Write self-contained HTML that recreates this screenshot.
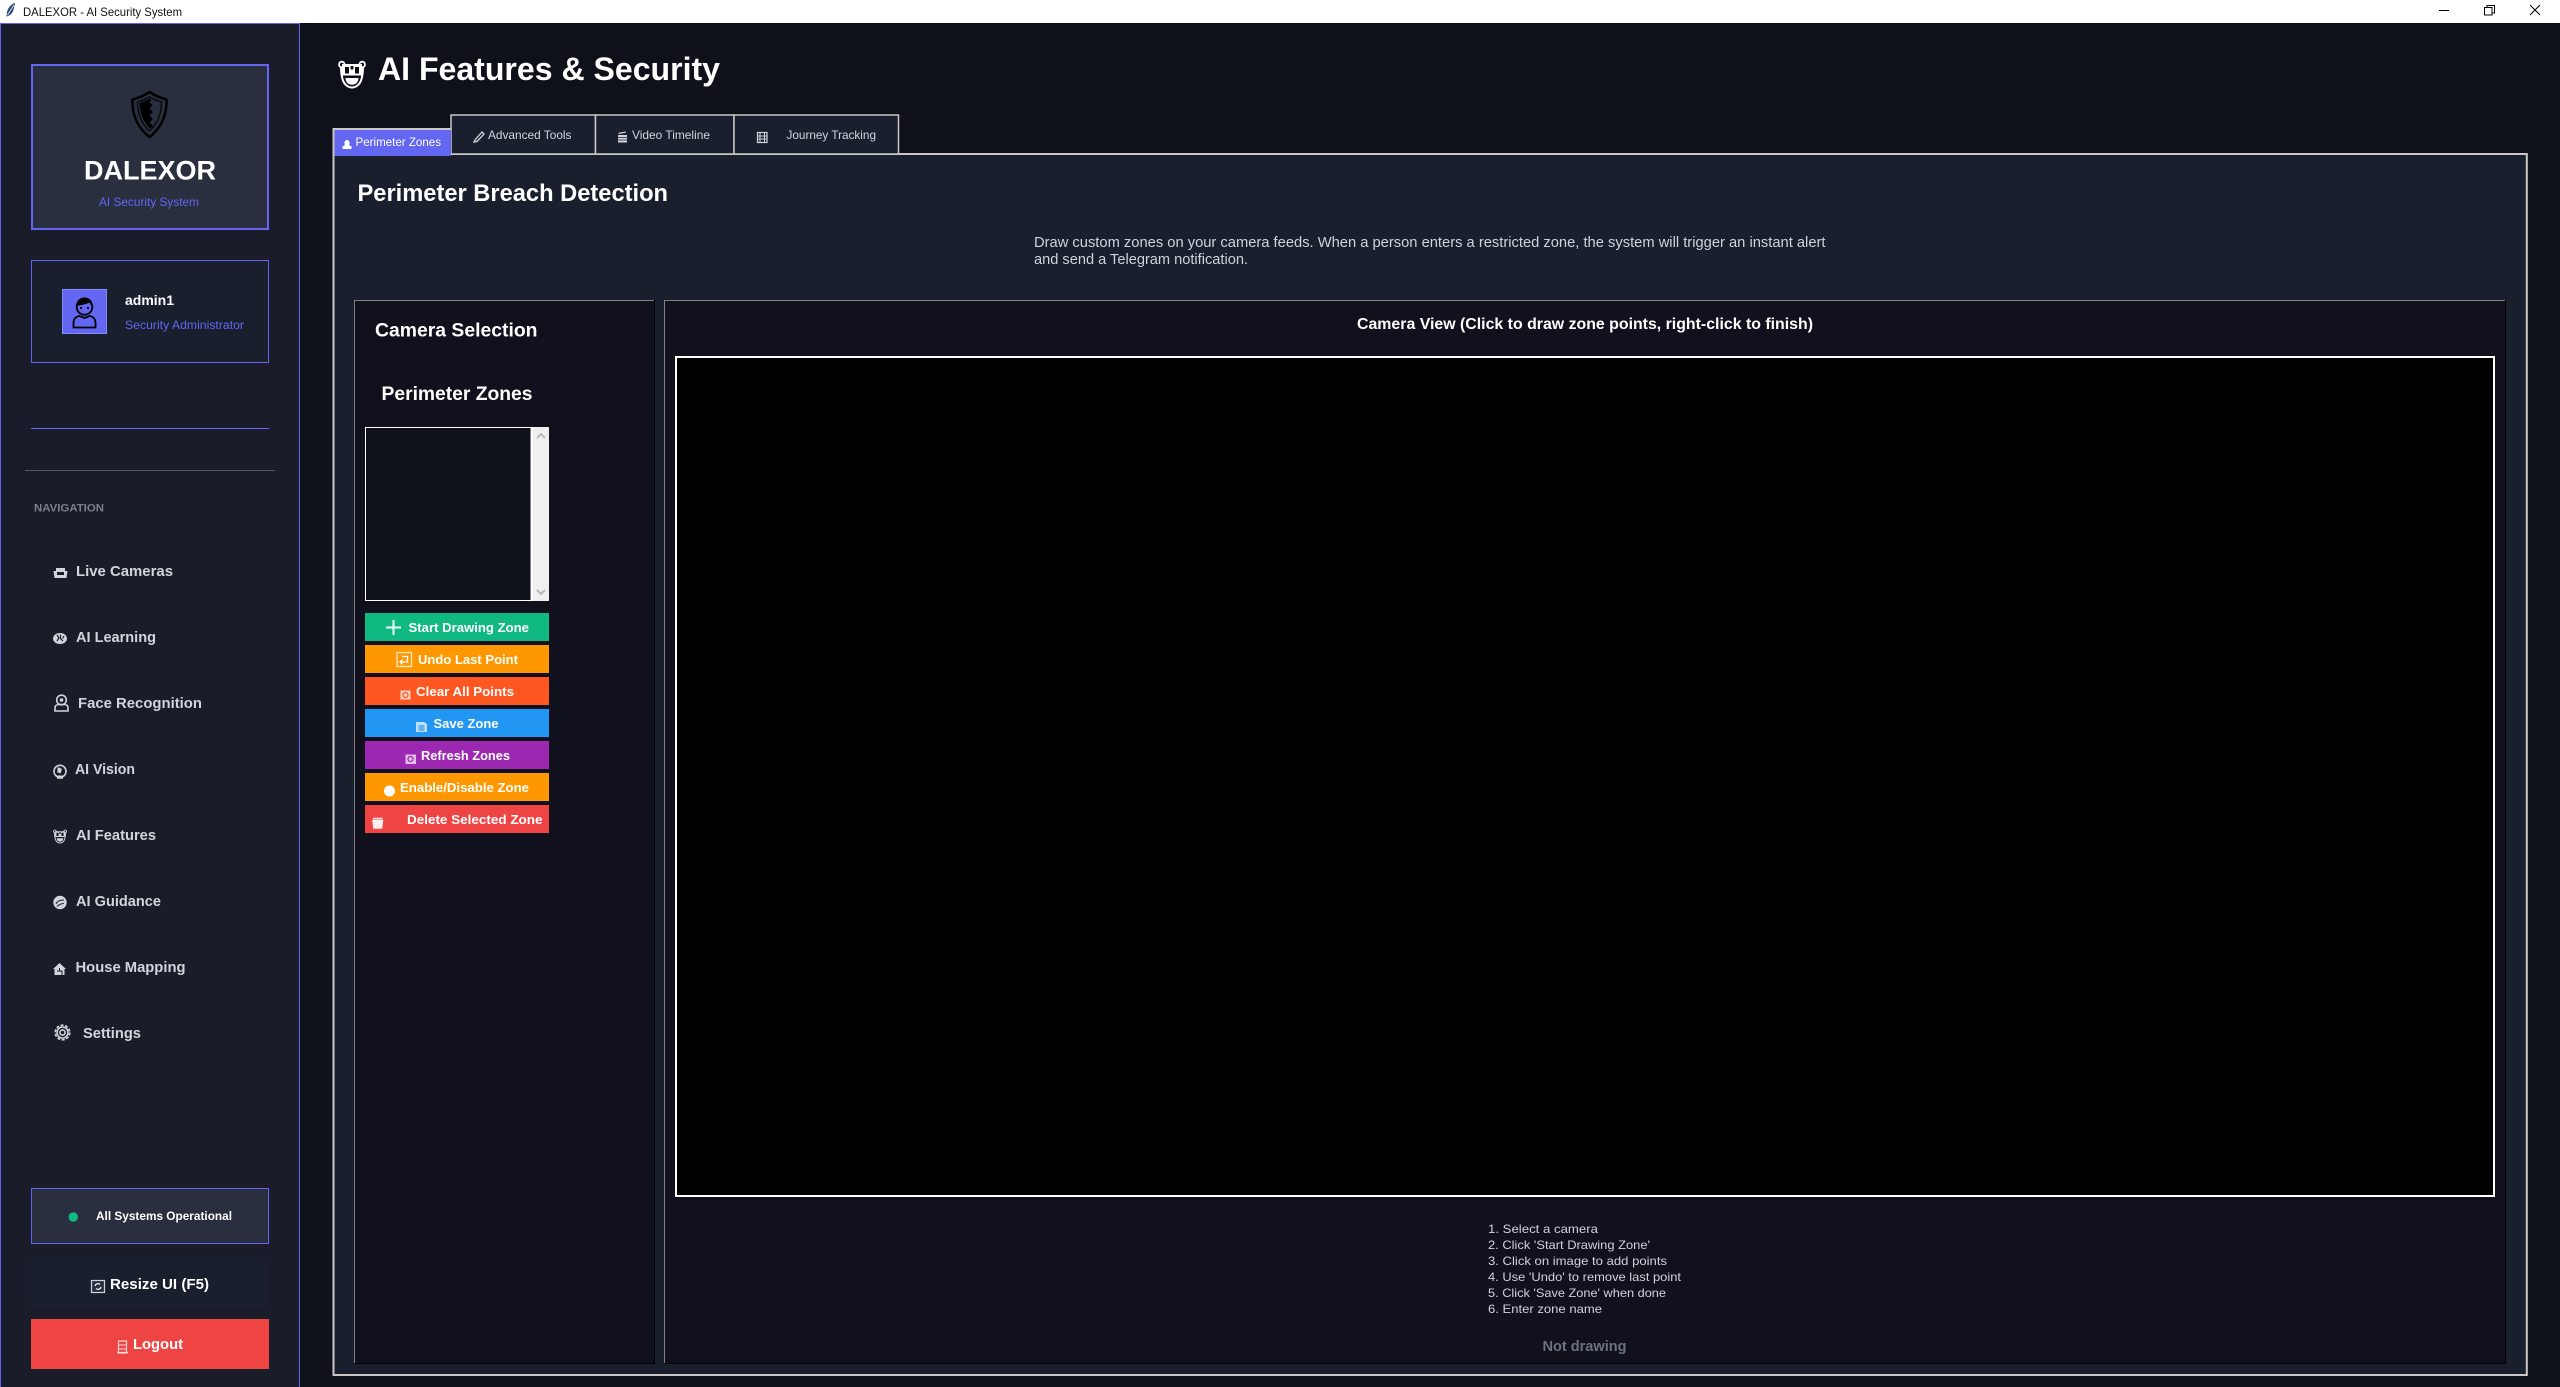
<!DOCTYPE html>
<html lang="en"><head><meta charset="utf-8"><title>DALEXOR - AI Security System</title>
<style>
html,body{margin:0;padding:0;background:#0f111a;width:2560px;height:1387px;overflow:hidden}
svg{display:block}
text{font-family:"Liberation Sans",Arial,sans-serif;fill:#fff}
.b{font-weight:700}
.nav{font-weight:700;font-size:15px;fill:#d1d5db}
.btn{font-weight:700;font-size:13px;fill:#fff}
.tab{font-size:12px;fill:#d1d5db}
.ins{font-size:12px;fill:#cfd3da}
.desc{font-size:15px;fill:#cfd3da}
.ic{fill:none;stroke:#d1d5db;stroke-width:1.6}
.icf{fill:#d1d5db}
</style></head><body>
<svg xmlns="http://www.w3.org/2000/svg" width="2560" height="1387" viewBox="0 0 2560 1387">
<defs>
<symbol id="beast" viewBox="0 0 28 28">
<circle cx="3.800" cy="4" r="2.800" fill="none" stroke="currentColor" stroke-width="1.800"/>
<circle cx="24.200" cy="4" r="2.800" fill="none" stroke="currentColor" stroke-width="1.800"/>
<path d="M3 6.500C3 12 3.500 16 5 20c1.500 4 5 7 9 7s7.500-3 9-7c1.500-4 2-8 2-13.500" fill="none" stroke="currentColor" stroke-width="2"/>
<path d="M4 3.500h20v11.500H4z" fill="currentColor"/>
<path d="M7 6.500h4v6.500H7zM12.600 5.500h2.800v3.500h-2.800zM17 6.500h4v6.500h-4z" fill="#0f111a"/>
<path d="M7.500 17.500h13c0 4-2.700 6.800-6.500 6.800s-6.500-2.800-6.500-6.800z" fill="currentColor"/>
</symbol>
</defs>

<!-- window -->
<rect width="2560" height="1387" fill="#0f111a"/>
<rect width="2560" height="23" fill="#fff"/>
<path d="M15 3c-4 1-7 5-8 9-.4 2-.4 3.500-.4 5l1-1c2.500-.5 4.500-2.500 5.500-5 .8-2.500 1.500-5.500 1.900-8z" fill="#2b4a78"/>
<path d="M14 5 7.500 15" stroke="#cfe0f5" stroke-width="1" fill="none"/>
<text x="23" y="16" font-size="12" style="fill:#111" textLength="159" lengthAdjust="spacingAndGlyphs">DALEXOR - AI Security System</text>
<rect x="2439" y="10" width="10" height="1" fill="#000"/>
<path d="M2484.500 7.500h7.500v7.500h-7.500zM2487 7.500V5.500h7.500v7.500H2492" fill="none" stroke="#000" stroke-width="1"/>
<path d="M2530 5l10 10M2540 5l-10 10" stroke="#000" stroke-width="1" fill="none"/>

<!-- sidebar -->
<rect x="0" y="23" width="300" height="1364" fill="#1a1d29"/>
<rect x="0" y="23" width="300" height="1" fill="#6366f1"/>
<rect x="0" y="23" width="1" height="1364" fill="#6366f1"/>
<rect x="299" y="23" width="1" height="1364" fill="#6366f1"/>

<!-- logo card -->
<rect x="32" y="65" width="236" height="164" fill="#2a2f3f" stroke="#6366f1" stroke-width="2"/>
<path d="M149.500 92C144 96 138 98 132.500 99.500 132 115 138 128 149.500 137 161 128 167 115 166.500 99.500 161 98 155 96 149.500 92z" fill="none" stroke="#000" stroke-width="2.400"/>
<path d="M149.500 97C145 99.500 141 101 137.500 102 137.500 114 142 124 149.500 131 157 124 161.500 114 161.500 102 158 101 154 99.500 149.500 97z" fill="none" stroke="#05060a" stroke-width="1.300"/>
<path d="M149.500 98.500C146 100.500 142.500 102 139.500 103 139.500 113 143.500 122 150 128.500L153 126 149.500 122.500 153 119 149.500 115.500 153 112 149.500 108.500 152.500 105 149.500 102 151.500 100z" fill="#000"/>
<text class="b" x="84" y="179.500" font-size="27" textLength="132" lengthAdjust="spacingAndGlyphs">DALEXOR</text>
<text x="99" y="206" font-size="12" style="fill:#6366f1" textLength="100" lengthAdjust="spacingAndGlyphs">AI Security System</text>

<!-- user card -->
<rect x="31.500" y="260.500" width="237" height="102" fill="#1a1f2e" stroke="#6366f1" stroke-width="1"/>
<rect x="62.500" y="289.500" width="44" height="44" fill="#6366f1" stroke="#818cf8" stroke-width="1"/>
<circle cx="84.500" cy="307" r="7.800" fill="none" stroke="#000" stroke-width="1.800"/>
<path d="M76.500 306c-.5-5.500 3.500-8.500 8-8.500s8.500 3 8 8.500c-1.500-.5-2.500-2-3-3.500-3 1.500-6.500 2.200-13 3.500z" fill="#000"/>
<rect x="80" y="307" width="2" height="2" fill="#111"/><rect x="87" y="307" width="2" height="2" fill="#111"/>
<path d="M73.500 327.500v-4.500c0-4 2.500-6.500 6-7l5 2 5-2c3.500.5 6 3 6 7v4.500z" fill="none" stroke="#000" stroke-width="1.800"/>
<text class="b" x="125" y="305" font-size="14" textLength="49" lengthAdjust="spacingAndGlyphs">admin1</text>
<text x="125" y="329" font-size="12" style="fill:#6366f1" textLength="119" lengthAdjust="spacingAndGlyphs">Security Administrator</text>

<rect x="31" y="428" width="238" height="1" fill="#6366f1"/>
<rect x="25" y="470" width="250" height="1" fill="#55585f"/>
<text class="b" x="34" y="511.500" font-size="11" style="fill:#7a808c" textLength="70" lengthAdjust="spacingAndGlyphs">NAVIGATION</text>

<!-- nav -->
<path d="M53.500 571h14l-1 7h-12z" class="icf"/><rect x="56" y="568" width="9" height="3.500" class="icf"/><path d="M57 572h7v3h-7z" fill="#1a1d29"/>
<text class="nav" x="76" y="576" textLength="97" lengthAdjust="spacingAndGlyphs">Live Cameras</text>

<ellipse cx="60" cy="638.500" rx="7" ry="5.500" class="icf"/><path d="M57 635l2 3-2 3M60.500 634.500v4l2.500 2.500M64 636l-1.500 2.500" stroke="#1a1d29" stroke-width="1.200" fill="none"/>
<text class="nav" x="76" y="642" textLength="80" lengthAdjust="spacingAndGlyphs">AI Learning</text>

<circle cx="61.500" cy="700" r="4.800" class="ic"/><circle cx="61.500" cy="700" r="1.800" class="icf"/><path d="M55 711v-3c0-2.500 2-3.500 4-3.500h5c2 0 4 1 4 3.500v3z" class="ic"/>
<text class="nav" x="78" y="708" textLength="124" lengthAdjust="spacingAndGlyphs">Face Recognition</text>

<path d="M57 776.500a6 6 0 1 1 6 0" class="ic"/><path d="M56.500 775.500l1 3h5l1-3M58 767.500l3.500 1.500-1 4-3-1z" class="icf" stroke="#d1d5db" stroke-width=".6"/>
<text class="nav" x="75" y="774" textLength="60" lengthAdjust="spacingAndGlyphs">AI Vision</text>

<use href="#beast" x="53" y="829.500" width="14" height="14" style="color:#d1d5db"/>
<text class="nav" x="76" y="840" textLength="80" lengthAdjust="spacingAndGlyphs">AI Features</text>

<circle cx="60" cy="902.500" r="6.700" class="icf"/><path d="M56 904c1-3 4-4 8-4M57 906.500c2-2 4-3 7-3" stroke="#1a1d29" stroke-width="1" fill="none"/>
<text class="nav" x="76" y="906" textLength="85" lengthAdjust="spacingAndGlyphs">AI Guidance</text>

<path d="M59.500 963l6.500 6h-1.500v6h-10v-6H53z" class="icf"/><path d="M57 971h5v4M59.500 968v3" stroke="#1a1d29" stroke-width="1" fill="none"/>
<text class="nav" x="75.500" y="972" textLength="110" lengthAdjust="spacingAndGlyphs">House Mapping</text>

<circle cx="62.500" cy="1032.500" r="7.300" fill="none" stroke="#d1d5db" stroke-width="1.600" stroke-dasharray="3 1.600"/><circle cx="62.500" cy="1032.500" r="5.500" class="ic" stroke-width="1"/><circle cx="62.500" cy="1032.500" r="2.600" class="ic" stroke-width="1.200"/>
<text class="nav" x="83" y="1038" textLength="58" lengthAdjust="spacingAndGlyphs">Settings</text>

<!-- status -->
<rect x="31.500" y="1188.500" width="237" height="55" fill="#2a2f3f" stroke="#6366f1" stroke-width="1"/>
<circle cx="73.300" cy="1217" r="4.700" fill="#10b981"/>
<text class="b" x="96" y="1220" font-size="12" textLength="136" lengthAdjust="spacingAndGlyphs">All Systems Operational</text>

<rect x="31" y="1258" width="238" height="51" fill="#1a1f2e"/>
<rect x="91.500" y="1280.500" width="13" height="12" fill="#2a2f3f" stroke="#d1d5db" stroke-width="1.200"/>
<path d="M95 1286a3 3 0 0 1 5-1.500M101 1287a3 3 0 0 1-5 1.500" stroke="#fff" stroke-width="1.200" fill="none"/>
<text class="b" x="110" y="1289" font-size="15" textLength="99" lengthAdjust="spacingAndGlyphs">Resize UI (F5)</text>

<rect x="31" y="1319" width="238" height="50" fill="#ef4444"/>
<path d="M118.500 1341h8v12h-8zM117 1352.500h11" fill="none" stroke="#fcd5d5" stroke-width="1.200"/><path d="M119 1345h7M119 1349h7" stroke="#fcd5d5" stroke-width="1"/>
<text class="b" x="133" y="1349" font-size="15" textLength="50" lengthAdjust="spacingAndGlyphs">Logout</text>

<!-- heading -->
<use href="#beast" x="338" y="60.500" width="28" height="28" style="color:#fff"/>
<text class="b" x="378" y="80" font-size="32" textLength="342" lengthAdjust="spacingAndGlyphs">AI Features &amp; Security</text>

<!-- main notebook panel -->
<rect x="333.500" y="154" width="2193.300" height="1221" fill="#1a1f2e" stroke="#c8c8c4" stroke-width="2"/>

<!-- tabs -->
<g fill="#1a1f2e" stroke="#c8c8c4" stroke-width="1.500">
<rect x="451" y="115" width="144.500" height="39"/>
<rect x="595.500" y="115" width="138.500" height="39"/>
<rect x="734" y="115" width="164.500" height="39"/>
</g>
<rect x="334" y="129" width="117" height="27" fill="#6366f1"/>
<rect x="332.500" y="128" width="118.500" height="2" fill="#c8c8c4"/>
<rect x="332.500" y="128" width="2" height="28" fill="#c8c8c4"/>
<path d="M344.500 146v-3.500a2.500 2.500 0 0 1 5 0V146zM342.500 146h9v3h-9z" fill="#fff"/>
<text class="tab" style="fill:#fff" x="355.500" y="146" textLength="85.500" lengthAdjust="spacingAndGlyphs">Perimeter Zones</text>
<path d="M474 142l1-2 7-8 2 2-7 7.500z" fill="none" stroke="#d1d5db" stroke-width="1.300"/>
<text class="tab" x="488" y="139" textLength="83.500" lengthAdjust="spacingAndGlyphs">Advanced Tools</text>
<rect x="618" y="135" width="9" height="7.500" fill="#d1d5db"/><path d="M618 132.500l8-1.500.5 2-8 1.500zM618 137.500h9M618 140h9" stroke="#1a1f2e" stroke-width=".8" fill="#d1d5db"/>
<text class="tab" x="632" y="139" textLength="78" lengthAdjust="spacingAndGlyphs">Video Timeline</text>
<rect x="757.500" y="132.500" width="9.500" height="10" fill="none" stroke="#d1d5db" stroke-width="1.200"/><path d="M760 133v9M764.500 133v9M758 136h9M758 139h9" stroke="#d1d5db" stroke-width="1"/>
<text class="tab" x="786.500" y="139" textLength="89.500" lengthAdjust="spacingAndGlyphs">Journey Tracking</text>

<text class="b" x="357.500" y="201" font-size="24" textLength="310.500" lengthAdjust="spacingAndGlyphs">Perimeter Breach Detection</text>
<text class="desc" x="1034" y="247" textLength="791.500" lengthAdjust="spacingAndGlyphs">Draw custom zones on your camera feeds. When a person enters a restricted zone, the system will trigger an instant alert</text>
<text class="desc" x="1034" y="264" textLength="214" lengthAdjust="spacingAndGlyphs">and send a Telegram notification.</text>

<!-- left panel -->
<rect x="354" y="300" width="301" height="1064" fill="#10111c"/>
<rect x="354" y="300" width="300" height="1" fill="#808080"/>
<rect x="354" y="300" width="1" height="1064" fill="#808080"/>
<rect x="654" y="300" width="1" height="1064" fill="#000"/>
<rect x="354" y="1363" width="301" height="1" fill="#000"/>

<text class="b" x="375" y="336.500" font-size="19" textLength="162.500" lengthAdjust="spacingAndGlyphs">Camera Selection</text>
<text class="b" x="381.500" y="400" font-size="19" textLength="151" lengthAdjust="spacingAndGlyphs">Perimeter Zones</text>

<rect x="365" y="427" width="184" height="174" fill="#f0f0f0"/>
<rect x="365" y="427" width="168" height="174" fill="#fff"/>
<rect x="366" y="428" width="165" height="172" fill="#0f111a"/>
<rect x="530" y="428" width="1" height="172" fill="#808080"/>
<path d="M537 438l4-4 4 4M537 590l4 4 4-4" fill="none" stroke="#b9b9b9" stroke-width="2"/>

<!-- buttons -->
<rect x="365" y="613" width="184" height="28" fill="#10b981"/>
<rect x="365" y="645" width="184" height="28" fill="#ff9800"/>
<rect x="365" y="677" width="184" height="28" fill="#ff5722"/>
<rect x="365" y="709" width="184" height="28" fill="#2196f3"/>
<rect x="365" y="741" width="184" height="28" fill="#9c27b0"/>
<rect x="365" y="773" width="184" height="28" fill="#ff9800"/>
<rect x="365" y="805" width="184" height="28" fill="#ef4444"/>

<path d="M386 627.500h15M393.500 620v15" stroke="#e8fff6" stroke-width="2" fill="none"/>
<text class="btn" x="408.500" y="632" textLength="120.500" lengthAdjust="spacingAndGlyphs">Start Drawing Zone</text>

<rect x="397" y="652.500" width="14.500" height="14" fill="none" stroke="#ffe9c7" stroke-width="1.300"/><path d="M400 662h7.500v-5.500H402M402.500 659.800L400 662l2.500 2.200" fill="none" stroke="#fff" stroke-width="1.300"/>
<text class="btn" x="418" y="664" textLength="100" lengthAdjust="spacingAndGlyphs">Undo Last Point</text>

<rect x="400.500" y="690.500" width="10" height="9" fill="#ffd0c0"/><circle cx="405.500" cy="695" r="2.500" fill="none" stroke="#ff5722" stroke-width="1.200"/>
<text class="btn" x="416" y="696" textLength="98" lengthAdjust="spacingAndGlyphs">Clear All Points</text>

<path d="M416 722h8l3 2v8h-11z" fill="#bfe0fb"/><rect x="418.500" y="725" width="6" height="6" fill="#5fb2f5"/>
<text class="btn" x="433.500" y="728" textLength="65" lengthAdjust="spacingAndGlyphs">Save Zone</text>

<rect x="405.500" y="754.500" width="10.500" height="9.500" fill="#e1bee7"/><circle cx="410.500" cy="759" r="2.500" fill="none" stroke="#9c27b0" stroke-width="1.200"/>
<text class="btn" x="421" y="760" textLength="89" lengthAdjust="spacingAndGlyphs">Refresh Zones</text>

<circle cx="389.500" cy="791" r="5.500" fill="#fff"/>
<text class="btn" x="400" y="792" textLength="129" lengthAdjust="spacingAndGlyphs">Enable/Disable Zone</text>

<path d="M372.500 820h10.500l-1 8.500h-8.500z" fill="#ffecec" stroke="#ffecec" stroke-width=".6" stroke-linejoin="round"/><path d="M373 818.500h9.500" stroke="#ffecec" stroke-width="1.500"/>
<text class="btn" x="407" y="824" textLength="135.500" lengthAdjust="spacingAndGlyphs">Delete Selected Zone</text>

<!-- right panel -->
<rect x="664" y="300" width="1841" height="1064" fill="#10111c"/>
<rect x="664" y="300" width="1841" height="1" fill="#808080"/>
<rect x="664" y="300" width="1" height="1064" fill="#808080"/>
<rect x="2505" y="300" width="1" height="1064" fill="#000"/>
<rect x="664" y="1363" width="1842" height="1" fill="#000"/>

<text class="b" x="1357" y="329" font-size="16" textLength="456" lengthAdjust="spacingAndGlyphs">Camera View (Click to draw zone points, right-click to finish)</text>
<rect x="676" y="357" width="1818" height="839" fill="#000" stroke="#fff" stroke-width="2"/>

<text class="ins" x="1488" y="1233" textLength="110" lengthAdjust="spacingAndGlyphs">1. Select a camera</text>
<text class="ins" x="1488" y="1249" textLength="162" lengthAdjust="spacingAndGlyphs">2. Click 'Start Drawing Zone'</text>
<text class="ins" x="1488" y="1265" textLength="179" lengthAdjust="spacingAndGlyphs">3. Click on image to add points</text>
<text class="ins" x="1488" y="1281" textLength="193" lengthAdjust="spacingAndGlyphs">4. Use 'Undo' to remove last point</text>
<text class="ins" x="1488" y="1297" textLength="178" lengthAdjust="spacingAndGlyphs">5. Click 'Save Zone' when done</text>
<text class="ins" x="1488" y="1313" textLength="114" lengthAdjust="spacingAndGlyphs">6. Enter zone name</text>
<text class="b" x="1542.500" y="1351" font-size="15" style="fill:#6b7280" textLength="84" lengthAdjust="spacingAndGlyphs">Not drawing</text>
</svg>
</body></html>
